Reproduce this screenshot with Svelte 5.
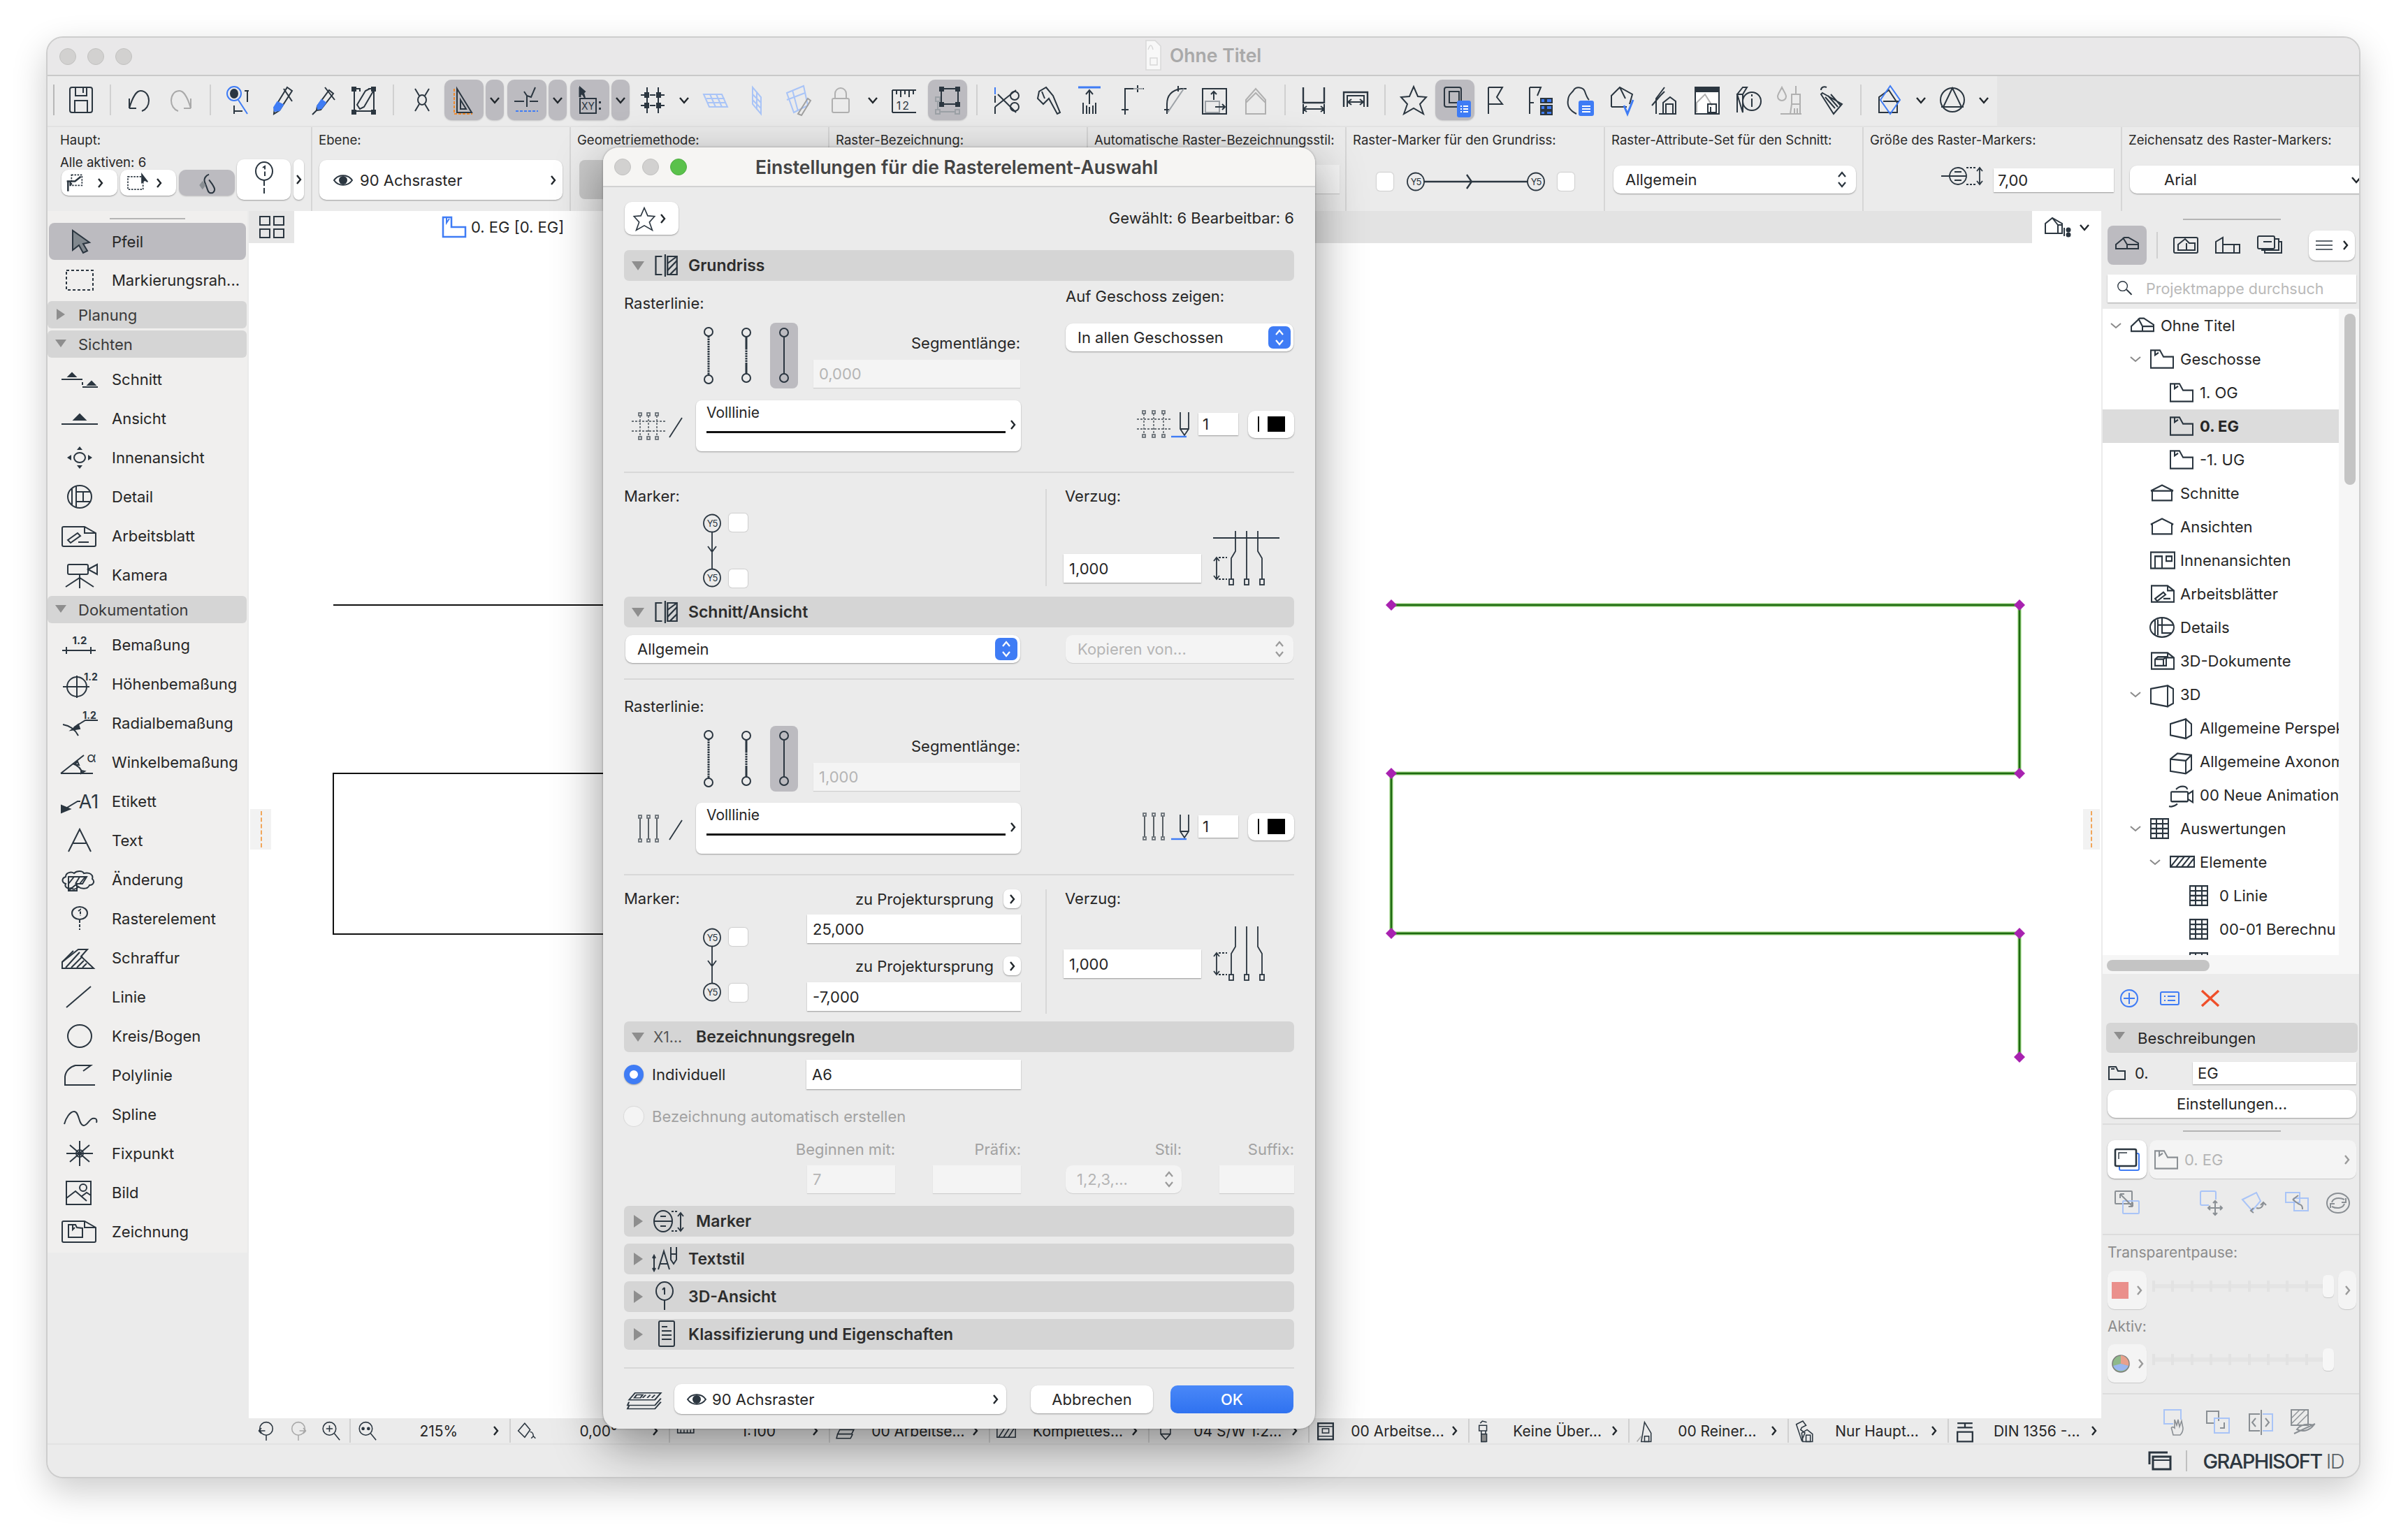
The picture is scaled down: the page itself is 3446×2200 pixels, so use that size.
<script>
	const blue = '#3f7cf5';

	const chevronPath = 'M3 3l5 6-5 6';

	const icons = {
		// toolbar
		save: '<rect x="6" y="4" width="32" height="36" rx="3"/><path d="M14 4v12h16V4M25 4v8M13 40V23h18v17"/>',
		undo: '<path d="M8 34h10M8 34V20M8 34C12 20 18 9 24 9c8 0 12 7 12 14 0 7-4 13-10 15"/>',
		redo: '<g stroke="#a9a9a9"><path d="M36 34H26M36 34V20M36 34C32 20 26 9 20 9 12 9 8 16 8 23c0 7 4 13 10 15"/></g>',
		find: `<circle cx="15" cy="13" r="10" stroke="${blue}"/><path d="M21 22l13 20" stroke="${blue}"/><ellipse cx="15" cy="13" rx="5" ry="6" fill="currentColor"/><path d="M34 9v16M30 9h6M15 30v12M15 38h12"/>`,
		dropper: `<path d="M31 4l7 5-18 28-8 5 1-9z"/><path d="M17 25l-5 8 1 5 7-1 5-8z" fill="${blue}" stroke="${blue}"/><path d="M26 6l12 18"/>`,
		syringe: `<path d="M32 8l6 5-18 23-6 1 1-6z"/><path d="M21 22l-6 9 1 4 5-1 6-8z" fill="${blue}" stroke="${blue}"/><path d="M26 4l14 18M14 37l-6 6"/>`,
		wand: '<path d="M8 6h8v4M8 6v30M8 36v6M8 38h28M36 6v36M30 6l-6 3-12 20 4 6 6-3 14-24M28 6h8"/><rect x="5" y="4" width="5" height="5" fill="currentColor"/><rect x="33" y="4" width="5" height="5" fill="currentColor"/><rect x="5" y="37" width="5" height="5" fill="currentColor"/><rect x="33" y="37" width="5" height="5" fill="currentColor"/>',
		cross: '<path d="M12 6l6 10M32 6l-6 10M12 38l6-10M32 38l-6-10"/><ellipse cx="22" cy="22" rx="6" ry="7"/>',
		setsq: '<path d="M12 6l21 34H12z"/><path d="M17 22l8 13h-8z"/><path d="M8 6v36h26" stroke="#ef8a2c" stroke-dasharray="4 2"/>',
		snap: `<path d="M4 24h14M26 24h12M22 16v16M22 16l6 2 6-14M22 16l-4-6"/><path d="M6 38h32" stroke="${blue}" stroke-dasharray="4 2"/>`,
		xy: '<path d="M8 4v14" stroke-width="3"/><path d="M8 4l7 6-2 2 2 7-4-6-3 2z" fill="currentColor"/><rect x="8" y="20" width="23" height="21"/><text x="19.5" y="36" font-size="14" text-anchor="middle" fill="currentColor" stroke="none">XY</text><rect x="35" y="24" width="3" height="3" fill="currentColor" stroke="none"/><rect x="35" y="33" width="3" height="3" fill="currentColor" stroke="none"/>',
		grid: '<path d="M14 4v8M30 4v8M14 19v8M30 19v8M14 33v8M30 33v8M5 15h6M18 15h8M33 15h6M5 30h6M18 30h8M33 30h6"/><g fill="currentColor" stroke="none"><rect x="10" y="11" width="7" height="8"/><rect x="27" y="11" width="7" height="8"/><rect x="10" y="26" width="7" height="8"/><rect x="27" y="26" width="7" height="8"/></g>',
		bgrid: '<g stroke="#a9c4f7"><path d="M6 14h26l8 18H14zM15 14l8 18M24 14l8 18M10 20h26M12 26h26"/></g>',
		bwall: '<g stroke="#a9c4f7"><path d="M16 4l12 14v24L16 28zM22 10v26M16 14l12 12M16 22l12 12"/></g>',
		bhat: '<g stroke="#a9c4f7"><path d="M6 12l24-10 6 28-20 10zM14 8l8 30M6 22l26-10"/></g><path d="M22 42l14-22 4 3-13 21z" stroke="#a0a0a0"/>',
		lock: '<g stroke="#b0b0b0"><rect x="9" y="20" width="24" height="20" rx="2"/><path d="M13 20v-7a8 8 0 0 1 16 0v7"/></g>',
		ruler: '<path d="M6 8h34M6 40h34M6 8v32M12 8v6M18 8v10M24 8v6M30 8v10M36 8v6"/><text x="22" y="36" font-size="16" text-anchor="middle" fill="currentColor" stroke="none" letter-spacing="2">12</text>',
		nodes: '<g stroke="#9ca1a6"><rect x="5" y="18" width="6" height="6" /><rect x="5" y="36" width="6" height="6"/><rect x="33" y="36" width="6" height="6"/><path d="M8 24v12M11 39h22"/></g><path d="M16 6h18M16 28h18M13 9v16M37 9v16"/><g fill="currentColor" stroke="none"><rect x="10" y="3" width="7" height="7"/><rect x="33" y="3" width="7" height="7"/><rect x="10" y="25" width="7" height="7"/><rect x="33" y="25" width="7" height="7"/></g>',
		sciss: `<path d="M6 4v10" stroke="${blue}"/><path d="M6 16v10M6 32v10M6 32L36 8M10 14l26 26"/><circle cx="34" cy="16" r="6"/><circle cx="34" cy="32" r="6"/>`,
		axe: '<path d="M20 4l10 12 10 24-4 2-12-22-8 8-8-8 2-10z"/><path d="M14 10l4 10"/>',
		uptrim: `<path d="M6 4h32" stroke="${blue}" stroke-width="3"/><path d="M22 8v20M17 14l5-6 5 6M13 26v16M22 32v10M31 26v16M18 30v12M27 30v12"/>`,
		corner: '<path d="M14 42V6h26M10 36h8M32 2v8" stroke-linecap="square"/><path d="M26 6h14" stroke="#9ca1a6"/>',
		fillet: '<path d="M14 42V28C14 14 22 8 34 6M10 36h8M30 2v8M34 6h8"/><path d="M15 40L38 6" stroke="#9ca1a6"/>',
		stretch: '<path d="M6 6h34v36H6z M6 6"/><path d="M22 10v12M18 14l4-4 4 4"/><rect x="10" y="24" width="20" height="16" stroke="#9ca1a6"/><path d="M24 32h14M34 28l4 4-4 4"/>',
		home: '<g stroke="#b0b0b0"><path d="M8 42V22L22 6l14 16v20z"/><path d="M8 26L22 12l14 14"/></g>',
		hsec: '<path d="M7 4v22h30V4" stroke-width="2.4"/><path d="M7 28v14M37 28v14M7 35h30M7 35l5-4M7 35l5 4M37 35l-5-4M37 35l-5 4"/>',
		hsec2: '<path d="M5 32V11h34v21" stroke-width="2.4"/><path d="M10 32V16h24v16"/><path d="M11 25h22M11 25l5-4M11 25l5 4M33 25l-5-4M33 25l-5 4"/>',
		star: '<path d="M22 3l6 14 12 1-9 10 5 14-14-8-14 8 5-14-9-10 12-1z"/>',
		views: `<rect x="7" y="4" width="24" height="28" rx="3"/><rect x="14" y="10" width="14" height="16"/><rect x="26" y="24" width="18" height="22" rx="2" fill="${blue}" stroke="${blue}"/><path d="M30 31h2M30 35h2M30 39h2M34 31h7M34 35h7M34 39h7" stroke="#fff" stroke-width="2"/>`,
		flag: '<path d="M12 4v38M12 4h20l-8 14 8 10H12"/>',
		flagl: `<path d="M10 4v38M10 4h16l-5 12M10 26h6"/><g fill="${blue}"><rect x="26" y="20" width="6" height="6"/><rect x="26" y="30" width="6" height="6"/><rect x="26" y="38" width="6" height="5"/><rect x="34" y="20" width="8" height="6"/><rect x="34" y="30" width="8" height="6"/><rect x="34" y="38" width="8" height="5"/></g>`,
		cloud: `<path d="M16 42C8 38 2 32 4 22c0-8 6-10 8-14 4-6 14-4 16 2 2 6 4 10 6 12"/><rect x="20" y="24" width="20" height="20" rx="2" fill="${blue}" stroke="${blue}"/><path d="M24 31h12M24 35h12M24 39h12" stroke="#fff" stroke-width="2"/>`,
		homeck: `<path d="M6 32V16L18 4l18 10-4 14M6 32h22M18 4l8 16"/><path d="M24 30l5 12 8-20" stroke="${blue}" stroke-width="3"/>`,
		homes: '<path d="M10 42V20L22 4M4 30l12-14 6-6M14 42h24V24l-8-6-10 8v16"/><rect x="24" y="28" width="10" height="14"/>',
		sheet: '<rect x="6" y="4" width="34" height="38" fill="#fff"/><rect x="6" y="4" width="34" height="6" fill="currentColor"/><path d="M8 40V26L20 14l10 16" stroke="#b0b0b0"/><rect x="24" y="28" width="12" height="12"/><path d="M28 32v8"/>',
		info: '<path d="M6 40V14L14 4h6l-6 10M6 14h8v26zM14 38V14"/><circle cx="27" cy="24" r="13"/><path d="M27 20v12M27 14v3"/>',
		brush: '<g stroke="#b0b0b0"><path d="M10 4c-4 8-6 10-6 13a6 6 0 0 0 12 0c0-3-2-5-6-13zM30 2v12M24 14h12v14H24zM24 28l-2 14M36 28v14M28 34v8M32 34v8M8 42h30" /></g>',
		tag: '<path d="M6 8c0-4 4-6 8-4M8 12l28 16-12 14L6 14zM16 16l14 16M20 14l14 16M12 18l14 16"/>',
		model: `<path d="M6 40V18L20 8l12 18v14z"/><path d="M22 2L8 22l14 20 14-20z" stroke="${blue}"/><path d="M12 24h22"/>`,
		circa: '<circle cx="22" cy="22" r="17"/><path d="M22 5L9 32h26zM6 32h32"/>',
		gridview: '<rect x="5" y="7" width="14" height="12"/><rect x="25" y="7" width="14" height="12"/><rect x="5" y="25" width="14" height="12"/><rect x="25" y="25" width="14" height="12"/>',
		view3: '<path d="M2 24V10L12 2l14 8v14zM12 2l8 10v12M20 12h6M29 16v12" /><circle cx="35" cy="19" r="2.5" fill="currentColor"/><circle cx="35" cy="26" r="2.5" fill="currentColor"/>',
		// status / misc
		zoomback: '<path d="M8 22h12M8 22l5-5M8 22l5 5"/><circle cx="22" cy="18" r="12"/><path d="M22 30v10"/>',
		zoomfwd: '<g stroke="#a9a9a9"><path d="M36 22H24M36 22l-5-5M36 22l-5 5"/><circle cx="22" cy="18" r="12"/><path d="M22 30v10"/></g>',
		zoomin: '<circle cx="20" cy="18" r="12"/><path d="M29 27l10 12M14 18h12M20 12v12"/>',
		zoomfit: '<circle cx="20" cy="18" r="12"/><path d="M29 27l10 12"/><circle cx="15" cy="18" r="2" fill="currentColor"/><circle cx="25" cy="18" r="2" fill="currentColor"/>',
		rotate: '<path d="M6 22L18 8l10 12-10 14zM28 24c4 0 6 4 6 8M30 36l4-4 4 4"/>',
		scale: '<path d="M6 12v14h30V12M12 20v6M18 20v6M24 20v6M30 20v6"/>',
		sheets: '<path d="M10 20h26l-4 8H6zM10 8h26l-4 8H6zM6 28l-2 8h26l4-8"/>',
		hatch: '<rect x="5" y="12" width="34" height="22"/><path d="M8 34L22 12M17 34L31 12M26 34L40 12"/>',
		penpt: '<path d="M13 8v20l9 10 9-10V8M13 28h18"/>',
		pageb: '<rect x="8" y="8" width="28" height="30" stroke-width="3"/><path d="M8 14h28M8 32h28"/><rect x="16" y="18" width="12" height="8"/>',
		overr: '<path d="M12 8l4-4 8 2M10 22V12h14v10z M14 22v20h8V22" /><rect x="14" y="28" width="10" height="14" fill="#8a8a8a"/>',
		renov: '<path d="M14 42L20 6l12 20v16z"/><rect x="20" y="32" width="8" height="10"/><path d="M6 42l8-10" stroke="#a9a9a9"/>',
		partial: '<path d="M6 10L18 4l6 8-8 4-2 4 8 6-6 14zM16 26l10-6 10 8v14H18z"/><rect x="24" y="30" width="8" height="12"/>',
		din: '<path d="M8 8h28M8 16h28M22 8v8M8 24h28v18H8z" stroke-width="3"/>',
		search: '<circle cx="17" cy="17" r="10"/><path d="M25 24l11 11" stroke-width="3"/>',
		// dialog icons
		secgrid: '<g transform="translate(-3 4) scale(1.12 1)"><path d="M12 4H4v26h8M16 1v32" /><rect x="19" y="4" width="12" height="26"/><path d="M19 14l12-10M19 24l12-14M22 30l9-10"/></g>',
		eye: '<path d="M3 16C9 7 23 7 29 16 23 25 9 25 3 16z"/><circle cx="16" cy="16" r="6" fill="currentColor" stroke="none"/>',
		stack: '<path d="M10 8h34l-8 14H2zM2 26l-2 7h36l8-14M2 34l-2 6h36l8-14"/><path d="M12 12h8l-3 6H9zM24 12l-4 6M30 12l-4 6M36 12l-4 6"/>',
		marker: '<g transform="translate(-4 2)"><ellipse cx="18" cy="19" rx="13" ry="15"/><path d="M5 19h26M14 12h8M14 26h8"/><path d="M30 5h8M30 33h8" stroke-dasharray="3 2"/><path d="M43 7v26M39 12l4-5 4 5M39 28l4 5 4-5"/></g>',
		textst: '<g transform="translate(-3 2)"><path d="M26 2v18l4 6 4-6V2M26 12h8" /><path d="M8 34L16 8l8 26M11 26h10M2 14v22M0 18l2-4 2 4M0 32l2 4 2-4"/></g>',
		pin: '<ellipse cx="14" cy="13" rx="12" ry="13"/><path d="M14 26v14M14 8v10M11 11l3-3"/>',
		doc: '<rect x="6" y="2" width="22" height="36" rx="2"/><path d="M10 10h8M10 16h14M10 22h14M10 28h14"/>',
		plus: `<circle cx="16" cy="16" r="12" stroke="${blue}"/><path d="M8 16h16M16 8v16" stroke="${blue}"/>`,
		listb: `<rect x="3" y="7" width="26" height="18" rx="2" stroke="${blue}"/><path d="M8 13h2M8 19h2M13 13h11M13 19h11" stroke="${blue}"/>`,
		redx: '<path d="M4 4l24 22M28 4L4 26" stroke="#ef4f2a" stroke-width="3.4"/>'
	};

	const side = {
		pfeil: '<path d="M18 2v28l9-7 6 11 6-3-6-10 9-2z" fill="#81888e"/>',
		marquee: '<rect x="9" y="4" width="38" height="28" stroke-dasharray="4 3"/>',
		schnitt: '<path d="M2 18h30M32 26v-4M32 29h22"/><path d="M12 14l5-5 5 5z M40 26l5-5 5 5z" fill="currentColor"/>',
		ansicht: '<path d="M2 26h52"/><path d="M20 20l8-8 8 8z" fill="currentColor"/>',
		innen: '<ellipse cx="28" cy="18" rx="8" ry="7"/><path d="M28 2l-4 5h8zM28 34l-4-5h8zM10 18l6-4v8zM46 18l-6-4v8z" fill="currentColor" stroke="none"/>',
		detail: '<ellipse cx="28" cy="18" rx="17" ry="16"/><path d="M17 6v24M23 3v30M23 11h21M23 25h21M33 11v14"/>',
		blatt: '<path d="M5 5h30l16 9v17a2 2 0 0 1-2 2H5a2 2 0 0 1-2-2V7a2 2 0 0 1 2-2zM35 5v9h16M26 27h15"/><path d="M11 24l14-10 4 4-14 10z"/>',
		kamera: '<rect x="11" y="3" width="29" height="14" rx="2"/><path d="M40 10l13-7v14zM28 17v20M8 35l20-13 20 13"/>',
		bem: '<path d="M3 26h48M9 21v10M44 21v10"/><text x="28" y="17" font-size="15" font-weight="700" text-anchor="middle" fill="currentColor" stroke="none">1.2</text>',
		hoehe: '<circle cx="24" cy="22" r="14"/><path d="M4 22h38M24 6v32"/><text x="44" y="13" font-size="14" font-weight="700" text-anchor="middle" fill="currentColor" stroke="none">1.2</text>',
		rad: '<path d="M4 20c12 2 18 8 22 16M20 24l16-10h18"/><path d="M16 28l10-8 2 6z" fill="currentColor"/><text x="42" y="12" font-size="14" font-weight="700" text-anchor="middle" fill="currentColor" stroke="none">1.2</text>',
		wink: '<path d="M1 34h46M1 34L34 8M18 20c6 2 12 7 14 14M25 17l-4 4 6 1zM30 30l5 1-5 3z"/><text x="45" y="18" font-size="20" text-anchor="middle" fill="currentColor" stroke="none">α</text>',
		etikett: '<path d="M5 30l20-12h4"/><path d="M2 34V24l12 5z" fill="currentColor"/><text x="41" y="28" font-size="27" text-anchor="middle" fill="currentColor" stroke="none">A1</text>',
		text: '<path d="M12 34L28 2l16 32M19 22h18"/>',
		aend: '<path d="M16 30c-6 2-10-2-8-6-6-2-6-8 0-10 0-6 8-8 12-5 4-4 12-4 14 0 8-2 14 2 12 8 4 3 2 9-4 9-2 6-12 6-16 2-2 4-8 5-10 2z"/><path d="M12 14h26l-6 10h-8v10h-12zM24 24l-12 10M20 14l-8 10M28 14l-6 10M36 14l-8 10"/>',
		raster: '<ellipse cx="28" cy="10" rx="11" ry="9"/><path d="M26 7l3-2v9M28 20v14" stroke-dasharray="4 2"/>',
		schraff: '<path d="M3 32V24L26 6h13l-9 10 18 17H3z"/><path d="M3 24l16-16M8 32L28 10M16 32l16-16M24 32l10-10M32 32l6-6"/>',
		linie: '<path d="M9 33L44 3"/>',
		kreis: '<ellipse cx="28" cy="18" rx="17" ry="16"/>',
		poly: '<path d="M50 32H7V20C8 12 14 6 22 4h22L33 12"/>',
		spline: '<path d="M6 32c2-8 8-18 14-18 8 0 6 20 14 20 6 0 8-12 16-10 2 0 3 3 2 6"/>',
		fix: '<circle cx="28" cy="18" r="5"/><path d="M9 18h38M28 0v36M14 6l28 24M42 6L14 30"/>',
		bild: '<rect x="9" y="2" width="35" height="33"/><circle cx="33" cy="11" r="5"/><path d="M9 26l13-10 16 14M30 24l8-6 6 4"/>',
		zeich: '<path d="M5 3h30l16 9v19a2 2 0 0 1-2 2H5a2 2 0 0 1-2-2V5a2 2 0 0 1 2-2zM35 3v9h16"/><path d="M12 8h10l2 4 8 1v13H12zM18 8v7l3-3"/>'
	};

	const tree = {
		house: '<path d="M2 20V14L14 4h6l14 8v8zM12 4l6 10v6M18 14h16"/>',
		floor: '<path d="M2 2h13l5 8h14v14H2zM8 2v6l5-3"/>',
		section: '<path d="M2 10L18 3l16 7M4 10h28v12H4zM2 10h32"/>',
		elev: '<path d="M2 10L18 3l16 7H32v12H4V10z"/>',
		inner: '<rect x="2" y="3" width="34" height="20"/><path d="M8 23V8h10v15M24 8h8v6h-8z"/>',
		sheet: '<path d="M3 3h23l9 6v14H3zM26 3v6h9"/><path d="M8 19l12-8 3 3-12 8zM20 19h10"/>',
		det: '<ellipse cx="18" cy="13" rx="17" ry="12"/><path d="M8 3v20M12 3v20M18 1v9h17M12 10h6v10h8M18 20h14"/>',
		doc3: '<path d="M3 3h23l9 6v14H3zM26 3v6h9"/><path d="M8 11l4-3h12v11H8zM8 11h12v8M20 11l4-3"/>',
		box3: '<path d="M2 6l24-4v26L2 24zM26 2l8 4v18l-8 4"/>',
		pers: '<path d="M2 8l22-6v24L2 22zM24 2l8 6v14l-8 4"/>',
		axon: '<path d="M2 10L12 3l20 2v18l-8 5-22-3zM2 10l22 2v16M24 12l8-7"/>',
		anim: '<rect x="3" y="9" width="24" height="12" rx="1"/><path d="M27 12l7-4v14l-7-4M10 6c6-6 16-4 16 0M0 27c4 1 8 0 12-3"/>',
		table: '<rect x="2" y="1" width="25" height="24"/><path d="M2 7h25M2 13h25M2 19h25M10 1v24M19 1v24"/>',
		hatchr: '<rect x="2" y="6" width="34" height="13"/><path d="M2 19l12-13M10 19L22 6M18 19L30 6M26 19l10-11"/>'
	};

	const tools = [
		{ k: 'sep', first: true },
		{ i: 'save' }, { k: 'sep' }, { i: 'undo' }, { i: 'redo' }, { k: 'sep' },
		{ i: 'find' }, { i: 'dropper' }, { i: 'syringe' }, { i: 'wand' }, { k: 'sep' },
		{ i: 'cross' },
		{ i: 'setsq', on: true, ml: 2 }, { k: 'drop', on: true, ml: 3 },
		{ i: 'snap', on: true, ml: 5 }, { k: 'drop', on: true, ml: 3 },
		{ i: 'xy', on: true, ml: 5 }, { k: 'drop', on: true, ml: 3 },
		{ i: 'grid', ml: 3 }, { k: 'drop', w: 30 },
		{ i: 'bgrid' }, { i: 'bwall' }, { i: 'bhat' }, { i: 'lock', ml: 2 }, { k: 'drop', w: 30 },
		{ i: 'ruler' }, { i: 'nodes', on: true, ml: 5 }, { k: 'sep', ml: 13 },
		{ i: 'sciss' }, { i: 'axe' }, { i: 'uptrim' }, { i: 'corner' }, { i: 'fillet' }, { i: 'stretch' }, { i: 'home' }, { k: 'sep' },
		{ i: 'hsec' }, { i: 'hsec2' }, { k: 'sep' },
		{ i: 'star' }, { i: 'views', on: true, ml: 1 },
		{ i: 'flag', w: 60 }, { i: 'flagl', w: 62 }, { i: 'cloud', w: 60 }, { i: 'homeck', w: 60 }, { i: 'homes', w: 60 },
		{ i: 'sheet', w: 60 }, { i: 'info', w: 60 }, { i: 'brush', w: 60 }, { i: 'tag', w: 60 }, { k: 'sep', ml: 10 },
		{ i: 'model', w: 60 }, { k: 'drop', w: 28 }, { i: 'circa', w: 62 }, { k: 'drop', w: 28 }
	];

	const sideItems = [
		{ t: 'item', i: 'pfeil', label: 'Pfeil', on: true },
		{ t: 'item', i: 'marquee', label: 'Markierungsrah...' },
		{ t: 'head', label: 'Planung', closed: true },
		{ t: 'head', label: 'Sichten' },
		{ t: 'item', i: 'schnitt', label: 'Schnitt' },
		{ t: 'item', i: 'ansicht', label: 'Ansicht' },
		{ t: 'item', i: 'innen', label: 'Innenansicht' },
		{ t: 'item', i: 'detail', label: 'Detail' },
		{ t: 'item', i: 'blatt', label: 'Arbeitsblatt' },
		{ t: 'item', i: 'kamera', label: 'Kamera' },
		{ t: 'head', label: 'Dokumentation' },
		{ t: 'item', i: 'bem', label: 'Bemaßung' },
		{ t: 'item', i: 'hoehe', label: 'Höhenbemaßung' },
		{ t: 'item', i: 'rad', label: 'Radialbemaßung' },
		{ t: 'item', i: 'wink', label: 'Winkelbemaßung' },
		{ t: 'item', i: 'etikett', label: 'Etikett' },
		{ t: 'item', i: 'text', label: 'Text' },
		{ t: 'item', i: 'aend', label: 'Änderung' },
		{ t: 'item', i: 'raster', label: 'Rasterelement' },
		{ t: 'item', i: 'schraff', label: 'Schraffur' },
		{ t: 'item', i: 'linie', label: 'Linie' },
		{ t: 'item', i: 'kreis', label: 'Kreis/Bogen' },
		{ t: 'item', i: 'poly', label: 'Polylinie' },
		{ t: 'item', i: 'spline', label: 'Spline' },
		{ t: 'item', i: 'fix', label: 'Fixpunkt' },
		{ t: 'item', i: 'bild', label: 'Bild' },
		{ t: 'item', i: 'zeich', label: 'Zeichnung' }
	];

	const treeRows = [
		{ l: 0, open: true, i: 'house', label: 'Ohne Titel' },
		{ l: 1, open: true, i: 'floor', label: 'Geschosse' },
		{ l: 2, i: 'floor', label: '1. OG' },
		{ l: 2, i: 'floor', label: '0. EG', sel: true },
		{ l: 2, i: 'floor', label: '-1. UG' },
		{ l: 1, i: 'section', label: 'Schnitte' },
		{ l: 1, i: 'elev', label: 'Ansichten' },
		{ l: 1, i: 'inner', label: 'Innenansichten' },
		{ l: 1, i: 'sheet', label: 'Arbeitsblätter' },
		{ l: 1, i: 'det', label: 'Details' },
		{ l: 1, i: 'doc3', label: '3D-Dokumente' },
		{ l: 1, open: true, i: 'box3', label: '3D' },
		{ l: 2, i: 'pers', label: 'Allgemeine Perspek' },
		{ l: 2, i: 'axon', label: 'Allgemeine Axonom' },
		{ l: 2, i: 'anim', label: '00 Neue Animation' },
		{ l: 1, open: true, i: 'table', label: 'Auswertungen' },
		{ l: 2, open: true, i: 'hatchr', label: 'Elemente' },
		{ l: 3, i: 'table', label: '0 Linie' },
		{ l: 3, i: 'table', label: '00-01 Berechnu' },
		{ l: 3, i: 'table', label: '' }
	];

	const infoLabels = [
		'Haupt:', 'Ebene:', 'Geometriemethode:', 'Raster-Bezeichnung:', 'Automatische Raster-Bezeichnungsstil:',
		'Raster-Marker für den Grundriss:', 'Raster-Attribute-Set für den Schnitt:', 'Größe des Raster-Markers:', 'Zeichensatz des Raster-Markers:'
	];

	const status = [
		{ i: 'rotate', label: '0,00°' }, { i: 'scale', label: '1:100' }, { i: 'sheets', label: '00 Arbeitse...' },
		{ i: 'hatch', label: 'Komplettes...' }, { i: 'penpt', label: '04 S/W 1:2...' }, { i: 'pageb', label: '00 Arbeitse...' },
		{ i: 'overr', label: 'Keine Über...' }, { i: 'renov', label: '00 Reiner...' }, { i: 'partial', label: 'Nur Haupt...' }, { i: 'din', label: 'DIN 1356 -...' }
	];

	const greens = [[1991, 866], [2890, 866], [2890, 1107], [1991, 1107], [1991, 1336], [2890, 1336], [2890, 1513]];
	const ticks = Array.from({ length: 10 });
</script>

{#snippet ic(name, w = 44, h = 44, set = icons)}
	<svg class="ic" width={w} height={h} viewBox="0 0 {w} {h}">{@html set[name]}</svg>
{/snippet}

{#snippet chevron(cls = '')}
	<svg class="chev {cls}" width="11" height="18" viewBox="0 0 11 18"><path d={chevronPath} /></svg>
{/snippet}

{#snippet drop()}
	<svg class="chev" width="16" height="11" viewBox="0 0 16 11"><path d="M2 2l6 7 6-7" /></svg>
{/snippet}

{#snippet updown(white = false)}
	<svg class="updown" class:white width="16" height="26" viewBox="0 0 16 26"><path d="M3 9l5-6 5 6M3 17l5 6 5-6" /></svg>
{/snippet}

{#snippet ys(cx, cy)}
	<ellipse {cx} {cy} rx="12" ry="12.5" />
	<text x={cx} y={cy + 5} font-size="13" text-anchor="middle" fill="currentColor" stroke="none" letter-spacing="-1">Y5</text>
{/snippet}

{#snippet sectionHead(label, iconName, closed = false, cls = '')}
	<div class="sechead {cls}">
		<span class="tri" class:closed></span>
		<span class="secicon">
			{#if iconName}
				<svg class="ic" width="46" height="42" viewBox="0 0 46 42" >{@html icons[iconName]}</svg>
			{:else}
				<span class="x1">X1...</span>
			{/if}
		</span>
		<span>{label}</span>
	</div>
{/snippet}

{#snippet lineTypes()}
	<div class="linetypes">
		<div class="lt">
			<svg class="ic" width="24" height="84" viewBox="0 0 24 84"><circle cx="12" cy="8" r="6" /><circle cx="12" cy="76" r="6" /><path d="M12 14v56" stroke-dasharray="2.5 1" stroke-width="3" /></svg>
		</div>
		<div class="lt">
			<svg class="ic" width="24" height="84" viewBox="0 0 24 84"><circle cx="12" cy="9" r="6" /><circle cx="12" cy="74" r="6" /><path d="M12 15v16M12 52v16" stroke-width="3" /><path d="M12 31v21" stroke-dasharray="2.5 1" stroke-width="3" /></svg>
		</div>
		<div class="lt on">
			<svg class="ic" width="24" height="84" viewBox="0 0 24 84"><circle cx="12" cy="9" r="6" /><circle cx="12" cy="74" r="6" /><path d="M12 15v53" /></svg>
		</div>
	</div>
{/snippet}

{#snippet lineBox()}
	<div class="linebox">
		<span class="lbtxt">Volllinie</span>
		<div class="lbline"><span></span>{@render chevron()}</div>
	</div>
{/snippet}

{#snippet penRow(dense)}
	<div class="penrow">
		<svg class="ic thin" width="78" height="38" viewBox="0 0 78 38">
			{#if dense}
				<path d="M2 12h50M2 26h50M12 4v30M26 4v30M40 4v30" stroke-dasharray="3 2" stroke="#6b7278" />
				<g stroke="#6b7278"><rect x="10" y="0" width="4" height="4" /><rect x="24" y="0" width="4" height="4" /><rect x="38" y="0" width="4" height="4" /><rect x="10" y="34" width="4" height="4" /><rect x="24" y="34" width="4" height="4" /><rect x="38" y="34" width="4" height="4" /></g>
			{:else}
				<path d="M13 4v30M26 4v30M39 4v30" stroke="#4b5258" />
				<g stroke="#6b7278"><rect x="11" y="0" width="4" height="4" /><rect x="24" y="0" width="4" height="4" /><rect x="37" y="0" width="4" height="4" /><rect x="11" y="34" width="4" height="4" /><rect x="24" y="34" width="4" height="4" /><rect x="37" y="34" width="4" height="4" /></g>
			{/if}
			<path d="M64 2v24l6 9 6-9V2M64 26h12" />
			<path d="M51 37h22" stroke={blue} stroke-width="2.4" />
		</svg>
		<div class="field num pennum">1</div>
		<div class="colbtn"><i></i><b></b></div>
	</div>
{/snippet}

{#snippet offsetIcon(top)}
	<svg class="ic thin" width="95" height="78" viewBox="0 0 95 78">
		{#if top}<path d="M0 10h95" />{/if}
		<path d="M32 0v29l-6 10v30M48 0v69M64 0v29l6 10v30" />
		<path d="M5 38v31M1 43l4-5 4 5M1 64l4 5 4-5" />
		<path d="M8 38h12M8 69h12" stroke-dasharray="3 2" />
		<rect x="23" y="69" width="6" height="8" /><rect x="45" y="69" width="6" height="8" /><rect x="67" y="69" width="6" height="8" />
	</svg>
{/snippet}

{#snippet markerBlock()}
	<div class="markerblock">
		<svg class="ic thin" width="26" height="106" viewBox="0 0 26 106">
			{@render ys(13, 14)}
			{@render ys(13, 92)}
			<path d="M13 27v52M7 47l6 8 6-8" />
		</svg>
		<div class="checks"><span class="check"></span><span class="check"></span></div>
	</div>
{/snippet}

<div class="page">
	<div class="window">
		<header class="titlebar">
			<div class="lights"><i></i><i></i><i></i></div>
			<div class="wintitle">
				<svg width="24" height="44" viewBox="0 0 24 44" fill="#f8f8f8" stroke="#d8d8d8" stroke-width="1.5"><path d="M2 1h13l8 8v34H2z" /><path d="M5 14c3-8 5-8 7 0M8 26h10v10H8z" /></svg>
				<span>Ohne Titel</span>
			</div>
		</header>

		<div class="toolrow">
			<div class="toolbar">
				{#each tools as t}
					{#if t.k === 'sep'}
						<span class="tsep" class:first={t.first} style={t.ml ? `margin-left:${t.ml}px` : ''}></span>
					{:else if t.k === 'drop'}
						<span class="tdrop" class:on={t.on} style="width:{t.w ?? 26}px;margin-left:{t.ml ?? 0}px">{@render drop()}</span>
					{:else}
						<span class="tool" class:on={t.on} style="width:{t.on ? 56 : (t.w ?? 59.5)}px;margin-left:{t.ml ?? 0}px">{@render ic(t.i)}</span>
					{/if}
				{/each}
			</div>
		</div>

		<div class="infobox">
			{#each infoLabels as label, n}
				<section class="infocell">
					<div class="infolabel">{label}</div>
					{#if n === 0}
						<div class="haupt">
							<div class="alle">Alle aktiven: 6</div>
							<div class="hauptbtns">
								<span class="wbtn hb">
									<svg class="ic" width="40" height="34" viewBox="0 0 48 34"><path d="M4 31V14h12l10-8M2 14h6M8 14v8" stroke-width="3" /><rect x="10" y="3" width="18" height="18" stroke-dasharray="3 2" /></svg>
									{@render chevron()}
								</span>
								<span class="wbtn hb">
									<svg class="ic" width="40" height="34" viewBox="0 0 48 34"><rect x="6" y="6" width="26" height="22" stroke-dasharray="3 2" /><path d="M30 2v14l5-4 5 3z" fill="currentColor" /></svg>
									{@render chevron()}
								</span>
								<span class="hb grey">
									<svg class="ic" width="34" height="36" viewBox="0 0 44 44"><path d="M26 6c-6 2-10 8-8 14l6 16c2 6 10 6 12 0 2-4-2-8-4-12L26 16" stroke-width="2.6" /><path d="M14 18l-6 8 6 8 6-8z" fill="#8a8f94" stroke="none" /></svg>
								</span>
							</div>
						</div>
						<div class="pinbtn wbtn">
							<svg class="ic" width="30" height="52" viewBox="0 0 30 52"><ellipse cx="15" cy="14" rx="12" ry="13" /><path d="M13 9l3-2v14M15 27v22" stroke-dasharray="8 3" /></svg>
						</div>
						<div class="pinmore wbtn">{@render chevron()}</div>
					{:else if n === 1}
						<div class="ebene wbtn">
							<svg class="ic" width="32" height="32" viewBox="0 0 32 32">{@html icons.eye}</svg>
							<span>90 Achsraster</span>
							{@render chevron()}
						</div>
					{:else if n === 2}
						<div class="geom"></div>
					{:else if n === 4}
						<div class="autofld"></div>
					{:else if n === 5}
						<div class="markerline">
							<span class="check"></span>
							<svg class="ic thin" width="200" height="28" viewBox="0 0 200 28">
								{@render ys(14, 14)}
								<path d="M26 14h148M87 4l7 10-7 10" stroke-width="2.4" />
								{@render ys(186, 14)}
							</svg>
							<span class="check"></span>
						</div>
					{:else if n === 6}
						<div class="select wbtn attr"><span>Allgemein</span>{@render updown()}</div>
					{:else if n === 7}
						<div class="sizerow">
							<svg class="ic thin" width="62" height="28" viewBox="0 0 62 28"><circle cx="24" cy="14" r="12" /><path d="M0 14h36M19 8h10M19 20h10" /><path d="M36 2h14M36 26h14" stroke-dasharray="3 2" /><path d="M55 2v24M51 7l4-5 4 5M51 21l4 5 4-5" /></svg>
							<div class="field sizeinp">7,00</div>
						</div>
					{:else if n === 8}
						<div class="select wbtn font"><span>Arial</span>{@render drop()}</div>
					{/if}
				</section>
			{/each}
		</div>

		<div class="main">
			<aside class="leftpanel">
				<div class="grab"></div>
				<div class="sidelist">
					{#each sideItems as s}
						{#if s.t === 'head'}
							<div class="sidehead"><span class="tri small" class:closed={s.closed}></span>{s.label}</div>
						{:else}
							<div class="sideitem" class:on={s.on}>
								<svg class="ic" width="56" height="36" viewBox="0 0 56 36">{@html side[s.i]}</svg>
								<span>{s.label}</span>
							</div>
						{/if}
					{/each}
				</div>
			</aside>

			<div class="center">
				<div class="tabs">
					<div class="gridbtn">{@render ic('gridview')}</div>
					<div class="tab">
						<svg class="ic" width="36" height="32" viewBox="0 0 36 32"><path d="M2 2h12v14h20v14H2z" stroke={blue} stroke-width="2.5" /><path d="M7 2v8l4-6" stroke={blue} /></svg>
						<span>0. EG [0. EG]</span>
					</div>
					<div class="tabfill"></div>
					<div class="tabr">
						<svg class="ic" width="44" height="30" viewBox="0 0 44 30">{@html icons.view3}</svg>
						{@render drop()}
					</div>
				</div>
				<div class="canvas">
					<div class="orange left"></div>
					<div class="orange right"></div>
					<svg class="drawing" viewBox="356 348 2651 1682" preserveAspectRatio="none">
						<path d="M477 866H1000M1000 1107H477V1337H1000" fill="none" stroke="#111" stroke-width="2" />
						<path d="M1991 866H2890V1107H1991V1336H2890V1513" fill="none" stroke="#8ccb70" stroke-width="5" />
						<path d="M1991 866H2890V1107H1991V1336H2890V1513" fill="none" stroke="#1f6a12" stroke-width="2.5" />
						{#each greens as [x, y]}
							<path d="M{x - 8} {y}l8-8 8 8-8 8z" fill="#a822b0" />
						{/each}
					</svg>
				</div>
				<div class="statusbar">
					<div class="zooms">
						{@render ic('zoomback')}{@render ic('zoomfwd')}{@render ic('zoomin')}
					</div>
					<div class="scell zoomcell">{@render ic('zoomfit')}<span class="stxt">215%</span>{@render chevron()}</div>
					{#each status as s}
						<div class="scell">
							{@render ic(s.i)}
							<span class="stxt">{s.label}</span>
							{@render chevron()}
						</div>
					{/each}
				</div>
			</div>

			<aside class="rightpanel">
				<div class="grab"></div>
				<div class="rtabs">
					<span class="rtab on"><svg class="ic" width="38" height="30" viewBox="0 0 36 30">{@html tree.house}</svg></span>
					<span class="rsep"></span>
					<span class="rtab"><svg class="ic" width="38" height="30" viewBox="0 0 38 30"><rect x="2" y="4" width="34" height="22" rx="2" /><path d="M8 22V14l10-8 6 6h8v10zM20 12v10" /></svg></span>
					<span class="rtab"><svg class="ic" width="38" height="30" viewBox="0 0 38 30"><path d="M2 26V10L12 4v22zM12 26h24V14h-8v12M12 14h16" /></svg></span>
					<span class="rtab"><svg class="ic" width="38" height="30" viewBox="0 0 38 30"><rect x="2" y="2" width="24" height="18" rx="2" /><path d="M6 2v-0M26 6h6v16H8v-2M32 10h4v16H12v-4M10 10h12" /></svg></span>
					<span class="menubtn wbtn"><svg class="ic" width="26" height="16" viewBox="0 0 26 16"><path d="M1 2h24M1 8h24M1 14h24" stroke-width="1.6" /></svg>{@render chevron()}</span>
				</div>
				<div class="search">
					<svg class="ic" width="30" height="30" viewBox="0 0 44 44">{@html icons.search}</svg>
					<span>Projektmappe durchsuch</span>
				</div>
				<div class="treewrap">
					<div class="tree">
						{#each treeRows as r}
							<div class="trow" class:sel={r.sel} style="padding-left:{r.l * 28}px">
								<span class="tchev">
									{#if r.open}<svg width="16" height="9" viewBox="0 0 16 9"><path d="M1 1l7 6 7-6" /></svg>{/if}
								</span>
								<span class="ticon">
									<svg class="ic" width="36" height="30" viewBox="0 0 36 26" preserveAspectRatio="none">{@html tree[r.i]}</svg>
								</span>
								<span class="tlabel">{r.label}</span>
							</div>
						{/each}
					</div>
					<div class="vscroll"><i></i></div>
				</div>
				<div class="hscroll"><i></i></div>
				<div class="actions">
					<svg class="ic" width="32" height="32" viewBox="0 0 32 32">{@html icons.plus}</svg>
					<svg class="ic" width="32" height="32" viewBox="0 0 32 32">{@html icons.listb}</svg>
					<svg class="ic" width="32" height="30" viewBox="0 0 32 30">{@html icons.redx}</svg>
				</div>
				<div class="beschr"><span class="tri small"></span>Beschreibungen</div>
				<div class="descrow">
					<svg class="ic" width="27" height="22" viewBox="0 0 27 22"><path d="M2 2h10l3 6h10v12H2zM5 5h5" /></svg>
					<span class="desc0">0.</span>
					<div class="field descinp">EG</div>
				</div>
				<div class="wbtn einst">Einstellungen...</div>
				<div class="rdiv"></div>
				<div class="grab g2"></div>
				<div class="quick">
					<span class="wbtn qb">
						<svg class="ic" width="38" height="34" viewBox="0 0 38 34"><rect x="8" y="8" width="28" height="24" rx="2" stroke={blue} /><rect x="2" y="2" width="30" height="24" rx="2" fill="#fff" stroke-width="2.6" /><path d="M7 16V7h12" stroke-width="1.4" /></svg>
					</span>
					<span class="qstory">
						<svg class="ic dim" width="36" height="30" viewBox="0 0 36 26" preserveAspectRatio="none">{@html tree.floor}</svg>
						<span>0. EG</span>
						{@render chevron('cg')}
					</span>
				</div>
				<div class="navicons five">
					<svg class="ic dim" width="38" height="38" viewBox="0 0 38 38"><rect x="2" y="2" width="24" height="18" rx="1" stroke="#8a8f94" /><rect x="13" y="16" width="23" height="18" rx="1" stroke="#a9c4f7" /><path d="M9 6l18 18M9 6h6M9 6v6M27 24h-6M27 24v-6" stroke="#8a8f94" /></svg>
					<span class="navgap"></span>
					<svg class="ic dim" width="38" height="38" viewBox="0 0 38 38"><path d="M14 22H4a2 2 0 0 1-2-2V4a2 2 0 0 1 2-2h18a2 2 0 0 1 2 2v10" stroke="#a9c4f7" /><path d="M23 16v20M13 26h20M20 19l3-3 3 3M20 33l3 3 3-3M16 23l-3 3 3 3M30 23l3 3-3 3" stroke="#8a8f94" /></svg>
					<svg class="ic dim" width="38" height="38" viewBox="0 0 38 38"><path d="M2 14L22 4l6 12-12 14z" stroke="#a9c4f7" /><path d="M22 26c6 2 10-2 10-8M28 22l4-4 4 4M18 26l-4 4 4 3" stroke="#8a8f94" /></svg>
					<svg class="ic dim" width="38" height="38" viewBox="0 0 38 38"><path d="M4 4h20v14H4z" stroke="#a9c4f7" /><path d="M16 12h20v18H16z" stroke="#a9c4f7" /><path d="M14 14l8-6M14 14l8 6c4 2 6 2 6 8" stroke="#8a8f94" /></svg>
					<svg class="ic dim" width="38" height="38" viewBox="0 0 38 38"><ellipse cx="19" cy="19" rx="16" ry="14" stroke="#8a8f94" /><path d="M10 18c2-6 10-8 18-4M30 12v6h-6M28 20c-2 6-10 8-18 4M8 26v-6h6" stroke="#8a8f94" /></svg>
				</div>
				<div class="rdiv"></div>
				<div class="ghostlabel tp">Transparentpause:</div>
				<div class="sliderrow">
					<span class="qbd"><i class="swatch"></i>{@render chevron('cg')}</span>
					<div class="slider">
						<div class="trk">{#each ticks as _}<i></i>{/each}</div>
						<b></b>
					</div>
					<span class="qbd narrow">{@render chevron('cg')}</span>
				</div>
				<div class="ghostlabel ak">Aktiv:</div>
				<div class="sliderrow">
					<span class="qbd">
						<svg width="26" height="26" viewBox="0 0 26 26"><circle cx="13" cy="13" r="12" fill="#8fb98a" stroke="#7c7c7c" stroke-width="1.6" /><path d="M13 13V1a12 12 0 0 1 11 15z" fill="#e8a08c" /><path d="M13 13l11 3a12 12 0 0 1-22 0z" fill="#9ab6f0" /></svg>
						{@render chevron('cg')}
					</span>
					<div class="slider">
						<div class="trk">{#each ticks as _}<i></i>{/each}</div>
						<b></b>
					</div>
				</div>
				<div class="rdiv d3"></div>
				<div class="navicons four">
					<svg class="ic dim" width="38" height="38" viewBox="0 0 38 38"><path d="M16 22H3V2h24v14" stroke="#a9c4f7" /><path d="M14 30c-2-4 2-4 4-2V16l3 8 2-8 2 10 3-8 2 10c0 6-2 8-4 10H16z" stroke="#8a8f94" stroke-width="1.6" /></svg>
					<svg class="ic dim" width="38" height="38" viewBox="0 0 38 38"><path d="M20 18V4H3v17h10" stroke="#8a8f94" /><path d="M14 14h21v21H14z" stroke="#a9c4f7" /><path d="M28 20v8h-6" stroke="#8a8f94" /></svg>
					<svg class="ic dim" width="38" height="38" viewBox="0 0 38 38"><path d="M18 8H3v24h15" stroke="#8a8f94" /><path d="M22 8h14v24H22" stroke="#a9c4f7" /><path d="M20 2v36" stroke="#8a8f94" /><path d="M12 14l-5 6 5 6" stroke="#8a8f94" /><path d="M26 14l5 6-5 6" stroke="#8a8f94" /></svg>
					<svg class="ic dim" width="38" height="38" viewBox="0 0 38 38"><rect x="2" y="2" width="24" height="22" stroke="#8a8f94" /><path d="M2 14L14 2M2 22L22 2M10 24L26 8" stroke="#8a8f94" stroke-width="1.4" /><path d="M10 30c6-8 16-8 24-6-6 8-16 10-24 6zM6 36L36 22" stroke="#8a8f94" /></svg>
				</div>
			</aside>
		</div>

		<footer class="bottombar">
			<svg class="ic" width="34" height="30" viewBox="0 0 34 30"><path d="M2 20V3h26" stroke-width="3" /><rect x="7" y="9" width="25" height="18" stroke-width="3" /><path d="M7 14h25" /></svg>
			<span class="bsep"></span>
			<span class="gs">GRAPHISOFT <em>ID</em></span>
		</footer>
	</div>

	<div class="dialog">
		<div class="dlgtitle">
			<div class="lights dl"><i></i><i></i><i class="green"></i></div>
			<span>Einstellungen für die Rasterelement-Auswahl</span>
		</div>
		<div class="dlgbody">
			<div class="topline">
				<span class="wbtn favbtn"><svg class="ic" width="36" height="36" viewBox="0 0 44 44">{@html icons.star}</svg>{@render chevron()}</span>
				<span class="selcount">Gewählt: 6 Bearbeitbar: 6</span>
			</div>

			{@render sectionHead('Grundriss', 'secgrid', false, 'first')}
			<div class="form grund">
				<div class="fleft">
					<div class="lbl">Rasterlinie:</div>
					<div class="linerow">
						{@render lineTypes()}
						<div class="segcol">
							<div class="lbl r">Segmentlänge:</div>
							<div class="field off">0,000</div>
						</div>
					</div>
					<div class="stylerow">
						<svg class="ic thin" width="76" height="40" viewBox="0 0 76 40">
							<path d="M2 13h50M2 27h50M14 5v30M26 5v30M38 5v30" stroke-dasharray="3 2" stroke="#6b7278" />
							<g stroke="#6b7278"><rect x="12" y="1" width="4" height="4" /><rect x="24" y="1" width="4" height="4" /><rect x="36" y="1" width="4" height="4" /><rect x="12" y="35" width="4" height="4" /><rect x="24" y="35" width="4" height="4" /><rect x="36" y="35" width="4" height="4" /></g>
							<path d="M56 36L74 8" />
						</svg>
						{@render lineBox()}
					</div>
				</div>
				<div class="fright">
					<div class="lbl showl">Auf Geschoss zeigen:</div>
					<div class="select wbtn geschoss"><span>In allen Geschossen</span><span class="bluestep">{@render updown(true)}</span></div>
					{@render penRow(true)}
				</div>
			</div>
			<div class="divider"></div>
			<div class="form2 m1">
				<div class="m-left">
					<div class="lbl">Marker:</div>
					{@render markerBlock()}
				</div>
				<div class="m-right">
					<div class="lbl">Verzug:</div>
					<div class="vzrow v1">
						<div class="field num vzinp">1,000</div>
						{@render offsetIcon(true)}
					</div>
				</div>
			</div>

			{@render sectionHead('Schnitt/Ansicht', 'secgrid')}
			<div class="selrow">
				<div class="select wbtn"><span>Allgemein</span><span class="bluestep">{@render updown(true)}</span></div>
				<div class="select offsel"><span>Kopieren von...</span>{@render updown()}</div>
			</div>
			<div class="divider d-sec"></div>
			<div class="form sec">
				<div class="fleft">
					<div class="lbl">Rasterlinie:</div>
					<div class="linerow">
						{@render lineTypes()}
						<div class="segcol">
							<div class="lbl r">Segmentlänge:</div>
							<div class="field off">1,000</div>
						</div>
					</div>
					<div class="stylerow s2">
						<svg class="ic thin" width="76" height="40" viewBox="0 0 76 40">
							<path d="M14 5v30M26 5v30M38 5v30" stroke="#4b5258" />
							<g stroke="#6b7278"><rect x="12" y="1" width="4" height="4" /><rect x="24" y="1" width="4" height="4" /><rect x="36" y="1" width="4" height="4" /><rect x="12" y="35" width="4" height="4" /><rect x="24" y="35" width="4" height="4" /><rect x="36" y="35" width="4" height="4" /></g>
							<path d="M56 36L74 8" />
						</svg>
						{@render lineBox()}
					</div>
				</div>
				<div class="fright pr2">
					{@render penRow(false)}
				</div>
			</div>
			<div class="divider"></div>
			<div class="form2 m2">
				<div class="m-left m-left2">
					<div class="mcol">
						<div class="lbl">Marker:</div>
						<div class="mbwrap">{@render markerBlock()}</div>
					</div>
					<div class="fieldcol">
						<div class="projrow"><span>zu Projektursprung</span><span class="wbtn mini">{@render chevron()}</span></div>
						<div class="field num big">25,000</div>
						<div class="projrow p2"><span>zu Projektursprung</span><span class="wbtn mini">{@render chevron()}</span></div>
						<div class="field num big b2">-7,000</div>
					</div>
				</div>
				<div class="m-right tall">
					<div class="lbl">Verzug:</div>
					<div class="vzrow v2">
						<div class="field num vzinp">1,000</div>
						{@render offsetIcon(false)}
					</div>
				</div>
			</div>

			{@render sectionHead('Bezeichnungsregeln', '', false, 'wide')}
			<div class="radrow">
				<span class="radio on"></span>
				<span class="radlabel">Individuell</span>
				<div class="field num a6">A6</div>
			</div>
			<div class="autorow">
				<span class="radio"></span>
				<span class="radlabel off">Bezeichnung automatisch erstellen</span>
			</div>
			<div class="autogrid">
				<span></span><span class="al">Beginnen mit:</span><span></span><span class="al">Präfix:</span><span></span><span class="al">Stil:</span><span></span><span class="al">Suffix:</span>
				<span></span><div class="field off">7</div><span></span><div class="field off"></div><span></span>
				<div class="select offsel stil"><span>1,2,3,...</span>{@render updown()}</div>
				<span></span><div class="field off"></div>
			</div>

			{@render sectionHead('Marker', 'marker', true, 'wide s-m')}
			{@render sectionHead('Textstil', 'textst', true, 's10')}
			{@render sectionHead('3D-Ansicht', 'pin', true, 's10')}
			{@render sectionHead('Klassifizierung und Eigenschaften', 'doc', true, 's10')}

			<div class="divider d-end"></div>
			<div class="dlgfoot">
				<svg class="ic" width="50" height="30" viewBox="0 0 46 42" preserveAspectRatio="none">{@html icons.stack}</svg>
				<div class="wbtn footebene">
					<svg class="ic" width="32" height="32" viewBox="0 0 32 32">{@html icons.eye}</svg>
					<span>90 Achsraster</span>
					{@render chevron()}
				</div>
				<div class="wbtn abbr">Abbrechen</div>
				<div class="okbtn">OK</div>
			</div>
		</div>
	</div>
</div>

<style>
	:global(body) {
		margin: 0;
		background: #fff;
	}

	.page {
		position: relative;
		width: 3446px;
		height: 2200px;
		padding: 52px 0 0 66px;
		box-sizing: border-box;
		overflow: hidden;
		font-family: Inter, 'Noto Sans', sans-serif;
		font-size: 22px;
		color: #262626;
	}

	.ic {
		display: block;
		flex: none;
		fill: none;
		stroke: #2b3640;
		color: #2b3640;
		stroke-width: 2;
		font-family: Inter, sans-serif;
		overflow: visible;
	}

	.ic.thin {
		stroke-width: 1.8;
	}

	.ic.dim {
		stroke: #8a8f94;
		color: #8a8f94;
	}

	.chev {
		display: block;
		flex: none;
		fill: none;
		stroke: #20262b;
		stroke-width: 2.4;
	}

	:global(.chev.cg) {
		stroke: #9a9a9a;
	}

	.updown {
		display: block;
		flex: none;
		fill: none;
		stroke: #2b3640;
		stroke-width: 2.2;
	}

	.updown.white {
		stroke: #fff;
	}

	.window {
		width: 3312px;
		height: 2064px;
		box-sizing: border-box;
		display: flex;
		flex-direction: column;
		background: #ebebeb;
		border: 2px solid #cdcdcd;
		border-radius: 24px;
		overflow: hidden;
		box-shadow: 0 18px 50px rgba(0, 0, 0, 0.2);
	}

	.titlebar {
		flex: none;
		height: 53px;
		background: #e9e8e9;
		border-bottom: 2px solid #c9c9c9;
		display: flex;
		align-items: center;
		position: relative;
	}

	.lights {
		display: flex;
		gap: 16px;
		padding-left: 17px;
	}

	.lights i {
		width: 24px;
		height: 24px;
		border-radius: 50%;
		background: #d2d1d0;
		border: 1px solid #c1c0bf;
		box-sizing: border-box;
	}

	.lights i.green {
		background: #5ac14b;
		border-color: #50ad44;
	}

	.wintitle {
		position: absolute;
		left: 1570px;
		top: -2px;
		height: 100%;
		display: flex;
		align-items: center;
		gap: 12px;
		font-size: 26.5px;
		font-weight: 600;
		color: #a9a9a9;
	}

	.toolrow {
		flex: none;
		height: 71px;
		background: #e4e4e4;
		border-bottom: 2px solid #e2e2e2;
		display: flex;
	}

	.toolbar {
		width: 2790px;
		background: #ebebeb;
		display: flex;
		align-items: center;
		padding: 0 0 3px 8px;
		box-sizing: border-box;
	}

	.tsep {
		flex: none;
		width: 2px;
		height: 44px;
		background: #d0d0d0;
		margin: 0 11px;
	}

	.tsep.first {
		margin: 0 8px 0 0;
		background: #b8b8b8;
	}

	.tool {
		flex: none;
		height: 58px;
		display: flex;
		align-items: center;
		justify-content: center;
		border-radius: 10px;
		box-sizing: border-box;
	}

	.tool.on,
	.tdrop.on {
		background: #bcbbc0;
		box-shadow: 0 1px 2px rgba(0, 0, 0, 0.15);
	}

	.tdrop {
		flex: none;
		height: 58px;
		display: flex;
		align-items: center;
		justify-content: center;
		border-radius: 10px;
	}

	.infobox {
		flex: none;
		height: 120px;
		display: flex;
		padding-left: 9px;
		background: #ebebeb;
	}

	.infocell {
		flex: none;
		width: 370px;
		box-sizing: border-box;
		border-right: 2px solid #d6d6d6;
		padding-left: 9px;
		position: relative;
		display: flex;
		flex-wrap: wrap;
		align-content: flex-start;
		overflow: hidden;
	}

	.infocell:last-child {
		border-right: none;
	}

	.infolabel {
		flex: 0 0 100%;
		margin-top: 6px;
		line-height: 24px;
		font-size: 18.6px;
		color: #2a2a2a;
		white-space: nowrap;
	}

	.wbtn {
		background: #fff;
		border-radius: 10px;
		box-shadow: 0 1px 2px rgba(0, 0, 0, 0.35);
		box-sizing: border-box;
	}

	.haupt {
		width: 248px;
		height: 58px;
		margin: -1px 0 0 0;
		position: relative;
	}

	.infocell:first-child .infolabel {
		margin-bottom: 17px;
	}

	.alle {
		font-size: 18.6px;
		line-height: 22px;
		margin-top: -7px;
	}

	.hauptbtns {
		display: flex;
		gap: 4px;
		margin: 0 0 0 2px;
	}

	.hb {
		width: 80px;
		height: 37px;
		display: flex;
		align-items: center;
		gap: 4px;
		padding-left: 6px;
		flex: none;
		overflow: hidden;
	}

	.hb.grey {
		background: #bcbbc0;
		border-radius: 10px;
		box-shadow: 0 1px 2px rgba(0, 0, 0, 0.2);
		justify-content: center;
		padding: 0;
	}

	.pinbtn {
		width: 77px;
		height: 58px;
		flex: none;
		margin: -1px 0 0 5px;
		display: flex;
		align-items: center;
		justify-content: center;
	}

	.pinmore {
		width: 15px;
		height: 58px;
		margin: -1px 0 0 4px;
		display: flex;
		align-items: center;
		justify-content: center;
		flex: none;
	}

	.ebene {
		width: 348px;
		height: 57px;
		margin-top: 17px;
		margin-left: 1px;
		display: flex;
		align-items: center;
		padding: 0 8px 0 18px;
		gap: 8px;
	}

	.ebene span {
		flex: 1;
	}

	.geom {
		width: 120px;
		height: 56px;
		margin: 17px 0 0 3px;
		background: #c9c9c9;
		border-radius: 8px;
	}

	.autofld {
		width: 360px;
		height: 41px;
		margin: 24px 0 0 -9px;
		background: #f4f4f4;
		box-shadow: 0 1px 1px rgba(0, 0, 0, 0.15);
	}

	.markerline {
		display: flex;
		align-items: center;
		margin: 34px 0 0 34px;
	}

	.markerline .ic {
		margin: 0 17px 0 18px;
	}

	.check {
		display: block;
		width: 24px;
		height: 26px;
		border-radius: 5px;
		background: #fff;
		box-shadow: 0 0 1px 1px rgba(0, 0, 0, 0.12);
		flex: none;
	}

	.select {
		display: flex;
		align-items: center;
		justify-content: space-between;
		height: 40px;
		padding: 0 6px 0 17px;
		box-sizing: border-box;
		flex: none;
	}

	.select.attr {
		width: 347px;
		margin: 25px 0 0 3px;
		padding-right: 12px;
	}

	.select.font {
		width: 340px;
		margin: 25px 0 0 2px;
		padding: 0 8px 0 49px;
		overflow: hidden;
	}

	.select.font span {
		flex: 1;
	}

	.sizerow {
		display: flex;
		align-items: flex-start;
		margin: 26px 0 0 102px;
		gap: 13px;
	}

	.field {
		background: #fff;
		box-shadow: 0 1px 1.5px rgba(0, 0, 0, 0.35);
		box-sizing: border-box;
		display: flex;
		align-items: center;
		height: 40px;
		padding-left: 8px;
	}

	.sizeinp {
		width: 172px;
		height: 34px;
		margin-top: 3px;
		padding-left: 6px;
	}

	.main {
		flex: 1;
		min-height: 0;
		display: flex;
	}

	.leftpanel {
		flex: none;
		width: 286px;
		display: flex;
		flex-direction: column;
		position: relative;
	}

	.grab {
		position: absolute;
		top: 10px;
		left: 89px;
		width: 108px;
		height: 2px;
		background: #b4b4b4;
	}

	.sidelist {
		background: #f0efee;
		padding-top: 17px;
		height: 1491px;
		box-sizing: border-box;
	}

	.sideitem {
		height: 56px;
		display: flex;
		align-items: center;
		gap: 18px;
		padding-left: 18px;
		white-space: nowrap;
	}

	.sideitem.on {
		height: 53px;
		margin: 0 2px 1px 2px;
		padding-left: 16px;
		background: #bcbbc0;
		border-radius: 8px;
	}

	.sidehead {
		height: 39px;
		margin: 2px 1px 3px 0;
		background: #d5d5d5;
		border-radius: 6px;
		display: flex;
		align-items: center;
		padding-left: 44px;
		position: relative;
		color: #3a3a3a;
	}

	.tri {
		width: 0;
		height: 0;
		flex: none;
		border-style: solid;
		border-width: 13px 9px 0 9px;
		border-color: #8e8e8e transparent transparent transparent;
	}

	.tri.closed {
		border-width: 9px 0 9px 13px;
		border-color: transparent transparent transparent #8e8e8e;
		margin-left: 3px;
		margin-right: 2px;
	}

	.tri.small {
		position: absolute;
		left: 11px;
		top: 13px;
		margin: 0;
		border-width: 11px 8px 0 8px;
	}

	.tri.small.closed {
		border-width: 8px 0 8px 12px;
		top: 11px;
		margin: 0;
		left: 13px;
	}

	.center {
		flex: none;
		width: 2651px;
		display: flex;
		flex-direction: column;
		margin: 0 2px;
	}

	.tabs {
		flex: none;
		height: 46px;
		display: flex;
		background: #e3e3e3;
	}

	.gridbtn {
		width: 65px;
		flex: none;
		display: flex;
		align-items: center;
		justify-content: center;
		background: #e6e6e6;
	}

	.tab {
		width: 680px;
		flex: none;
		background: #fff;
		display: flex;
		align-items: center;
		gap: 6px;
		padding-left: 211px;
		box-sizing: border-box;
	}

	.tabfill {
		flex: 1;
	}

	.tabr {
		flex: none;
		width: 99px;
		background: #fff;
		display: flex;
		align-items: center;
		gap: 6px;
		padding-left: 17px;
		box-sizing: border-box;
	}

	.canvas {
		flex: 1;
		min-height: 0;
		background: #fff;
		position: relative;
	}

	.drawing {
		position: absolute;
		inset: 0;
		width: 100%;
		height: 100%;
	}

	.orange {
		position: absolute;
		top: 810px;
		width: 30px;
		height: 58px;
		background: #f2f2f2;
		z-index: 1;
	}

	.orange::after {
		content: '';
		position: absolute;
		left: 15px;
		top: 3px;
		bottom: 3px;
		border-left: 2px dashed #f2a65a;
	}

	.orange.left {
		left: 2px;
	}

	.orange.right {
		right: 2px;
		width: 24px;
	}

	.orange.right::after {
		left: 11px;
	}

	.statusbar {
		flex: none;
		height: 36px;
		display: flex;
		align-items: center;
		background: #ebebeb;
		overflow: hidden;
	}

	.zooms {
		width: 144px;
		flex: none;
		display: flex;
		padding-left: 2px;
		box-sizing: border-box;
	}

	.zooms :global(.ic) {
		width: 46px;
		height: 34px;
	}

	.scell {
		flex: none;
		width: 228.7px;
		height: 34px;
		box-sizing: border-box;
		border-left: 2px solid #d0d0d0;
		display: flex;
		align-items: center;
		padding: 0 14px 0 4px;
		font-size: 21px;
		white-space: nowrap;
	}

	.scell :global(.ic) {
		width: 38px;
		height: 34px;
	}

	.stxt {
		flex: 1;
		overflow: hidden;
		text-align: center;
		padding-left: 8px;
	}

	.rightpanel {
		flex: 1;
		min-width: 0;
		position: relative;
		padding-left: 7px;
		padding-right: 4px;
		background: #ebebeb;
		box-sizing: border-box;
		display: flex;
		flex-direction: column;
	}

	.rightpanel .grab {
		left: 115px;
		width: 140px;
		top: 11px;
	}

	.rightpanel .grab.g2 {
		position: static;
		margin: 8px 0 0 108px;
		flex: none;
	}

	.rtabs {
		margin-top: 21px;
		height: 56px;
		display: flex;
		align-items: center;
		flex: none;
	}

	.rtab {
		width: 56px;
		height: 56px;
		display: flex;
		align-items: center;
		justify-content: center;
		flex: none;
		margin-right: 4px;
		border-radius: 8px;
	}

	.rtab.on {
		background: #bcbbc0;
		margin-right: 14px;
	}

	.rsep {
		width: 2px;
		height: 38px;
		background: #d0d0d0;
		margin-right: 12px;
	}

	.menubtn {
		width: 66px;
		height: 43px;
		margin-left: 24px;
		display: flex;
		align-items: center;
		justify-content: center;
		gap: 12px;
		flex: none;
	}

	.search {
		margin-top: 14px;
		height: 40px;
		background: #fff;
		box-shadow: 0 1px 1.5px rgba(0, 0, 0, 0.3);
		display: flex;
		align-items: center;
		padding-left: 10px;
		gap: 15px;
		color: #b9b9b9;
		flex: none;
		white-space: nowrap;
		overflow: hidden;
		box-sizing: border-box;
	}

	.search span {
		width: 255px;
		overflow: hidden;
		font-size: 21.5px;
	}

	.treewrap {
		margin: 9px -4px 0 -7px;
		display: flex;
		height: 925px;
		flex: none;
		overflow: hidden;
	}

	.tree {
		width: 338px;
		flex: none;
		background: #fff;
		overflow: hidden;
	}

	.trow {
		height: 48px;
		box-sizing: border-box;
		display: flex;
		align-items: center;
		white-space: nowrap;
	}

	.trow.sel {
		background: #dcdcdc;
		font-weight: 700;
	}

	.tchev {
		width: 38px;
		flex: none;
		display: flex;
		justify-content: center;
		align-items: center;
	}

	.tchev svg {
		fill: none;
		stroke: #8a8a8a;
		stroke-width: 2;
		display: block;
	}

	.ticon {
		width: 38px;
		flex: none;
		display: flex;
		justify-content: center;
	}

	.tlabel {
		margin-left: 7px;
	}

	.vscroll {
		flex: 1;
		background: #f6f6f6;
		padding: 7px 0 0 8px;
	}

	.vscroll i {
		display: block;
		width: 16px;
		height: 245px;
		border-radius: 8px;
		background: #c4c4c4;
	}

	.hscroll {
		height: 27px;
		background: #f6f6f6;
		margin: 0 -4px 0 -7px;
		flex: none;
		padding: 7px 0 0 6px;
		box-sizing: border-box;
	}

	.hscroll i {
		display: block;
		width: 147px;
		height: 16px;
		border-radius: 8px;
		background: #c4c4c4;
	}

	.actions {
		height: 70px;
		flex: none;
		display: flex;
		align-items: center;
		gap: 26px;
		padding-left: 15px;
		box-sizing: border-box;
	}

	.beschr {
		height: 43px;
		margin: 0 -2px;
		background: #d5d5d5;
		border-radius: 6px;
		display: flex;
		align-items: center;
		padding-left: 45px;
		position: relative;
		flex: none;
	}

	.descrow {
		display: flex;
		align-items: center;
		height: 32px;
		margin-top: 13px;
		flex: none;
	}

	.desc0 {
		margin-left: 12px;
		width: 83px;
	}

	.descinp {
		width: 234px;
		height: 32px;
		padding-left: 7px;
	}

	.einst {
		height: 40px;
		margin-top: 8px;
		display: flex;
		align-items: center;
		justify-content: center;
		border-radius: 12px;
		flex: none;
	}

	.rdiv {
		height: 2px;
		background: #dcdcdc;
		margin: 8px -4px 0 -7px;
		flex: none;
	}

	.quick {
		display: flex;
		gap: 4px;
		margin-top: 12px;
		height: 55px;
		flex: none;
	}

	.qb {
		width: 56px;
		display: flex;
		align-items: center;
		justify-content: center;
		flex: none;
	}

	.qstory {
		flex: 1;
		background: #f4f4f4;
		border-radius: 10px;
		box-shadow: 0 1px 1px rgba(0, 0, 0, 0.15);
		display: flex;
		align-items: center;
		padding: 0 8px 0 6px;
		gap: 8px;
		color: #b5b5b5;
	}

	.qstory span {
		flex: 1;
	}

	.navicons {
		display: flex;
		align-items: center;
		flex: none;
		height: 38px;
		margin-top: 16px;
	}

	.navicons.five {
		gap: 22px;
		padding-left: 9px;
		margin-bottom: 17px;
	}

	.navgap {
		width: 40px;
	}

	.ghostlabel {
		color: #8c8c8c;
		font-size: 21px;
		line-height: 24px;
		flex: none;
	}

	.ghostlabel.tp {
		margin-top: 13px;
		margin-bottom: 14px;
	}

	.ghostlabel.ak {
		margin-top: 13px;
		margin-bottom: 13px;
	}

	.sliderrow {
		display: flex;
		height: 55px;
		flex: none;
	}

	.qbd {
		width: 56px;
		flex: none;
		height: 55px;
		background: #f4f4f4;
		border-radius: 10px;
		box-shadow: 0 1px 1px rgba(0, 0, 0, 0.15);
		display: flex;
		align-items: center;
		gap: 10px;
		padding-left: 6px;
		box-sizing: border-box;
	}

	.qbd.narrow {
		width: 26px;
		padding-left: 8px;
		margin-left: 6px;
	}

	.swatch {
		width: 24px;
		height: 24px;
		background: #ea908c;
		display: block;
		flex: none;
	}

	.slider {
		width: 260px;
		margin-left: 8px;
		position: relative;
		flex: none;
	}

	.trk {
		position: absolute;
		left: 0;
		right: 10px;
		top: 14px;
		height: 16px;
		display: flex;
		justify-content: space-between;
		background: linear-gradient(#e4e4e4, #e4e4e4) center / 100% 6px no-repeat;
	}

	.trk i {
		width: 4px;
		background: #e2e2e2;
		display: block;
	}

	.slider b {
		position: absolute;
		right: 0;
		top: 6px;
		width: 16px;
		height: 32px;
		background: #f6f6f6;
		border-radius: 6px;
		box-shadow: 0 1px 1px rgba(0, 0, 0, 0.15);
	}

	.rdiv.d3 {
		margin-top: 15px;
	}

	.navicons.four {
		gap: 23px;
		padding-left: 78px;
		margin-top: 20px;
	}

	.bottombar {
		flex: none;
		height: 46px;
		background: #ebebeb;
		border-top: 2px solid #e2e2e2;
		display: flex;
		align-items: center;
		justify-content: flex-end;
		padding-right: 22px;
	}

	.bsep {
		width: 2px;
		height: 30px;
		background: #c0c0c0;
		margin: 0 22px 0 20px;
	}

	.gs {
		font-size: 29px;
		letter-spacing: -1.6px;
		font-weight: 500;
		color: #2d3740;
		white-space: nowrap;
	}

	.gs em {
		font-style: normal;
		font-weight: 300;
		color: #5b6369;
	}

	/* settings dialog */
	.dialog {
		position: absolute;
		left: 863px;
		top: 211px;
		width: 1019px;
		height: 1834px;
		background: #ebebeb;
		border-radius: 22px;
		box-shadow: 0 0 3px rgba(0, 0, 0, 0.35), 0 24px 70px rgba(0, 0, 0, 0.42);
		overflow: hidden;
		z-index: 2;
	}

	.dlgtitle {
		height: 55px;
		background: #f6f5f3;
		border-bottom: 2px solid #d2d2d2;
		display: flex;
		align-items: center;
		position: relative;
		font-size: 26.5px;
		font-weight: 600;
		color: #444;
	}

	.dlgtitle span {
		position: absolute;
		left: 218px;
		white-space: nowrap;
	}

	.lights.dl {
		padding-left: 16px;
		gap: 16px;
	}

	.dlgbody {
		padding: 21px 30px 0;
	}

	.topline {
		height: 47px;
		display: flex;
		align-items: center;
		justify-content: space-between;
	}

	.selcount {
		margin-bottom: 2px;
	}

	.favbtn {
		width: 77px;
		height: 47px;
		margin-left: 1px;
		display: flex;
		align-items: center;
		gap: 3px;
		padding-left: 10px;
	}

	.sechead {
		height: 44px;
		background: #d5d5d5;
		border-radius: 7px;
		display: flex;
		align-items: center;
		padding-left: 11px;
		font-weight: 600;
		font-size: 23px;
		color: #2d2d2d;
		flex: none;
	}

	.sechead.first {
		margin-top: 22px;
	}

	.sechead.s10 {
		margin-top: 10px;
	}

	.sechead.s-m {
		margin-top: 18px;
	}

	.secicon {
		width: 48px;
		flex: none;
		margin-left: 15px;
		display: flex;
		align-items: center;
		height: 42px;
		overflow: visible;
	}

	.sechead.wide .secicon {
		width: 61px;
		margin-left: 13px;
	}

	.x1 {
		font-weight: 400;
		color: #555;
		font-size: 21px;
	}

	.lbl {
		line-height: 24px;
		white-space: nowrap;
	}

	.lbl.r {
		text-align: right;
	}

	.form {
		display: grid;
		grid-template-columns: 568px 327px;
		column-gap: 64px;
	}

	.form.grund {
		height: 273px;
	}

	.form.sec {
		height: 278px;
	}

	.fleft > .lbl {
		margin-top: 20px;
	}

	.form.sec .fleft > .lbl {
		margin-top: 26px;
	}

	.linerow {
		display: flex;
		margin-top: 16px;
		height: 94px;
		padding-left: 101px;
		gap: 22px;
	}

	.linetypes {
		display: flex;
		gap: 14px;
		flex: none;
	}

	.lt {
		width: 40px;
		height: 94px;
		border-radius: 8px;
		display: flex;
		align-items: center;
		justify-content: center;
	}

	.lt.on {
		background: #bcbbc0;
	}

	.segcol {
		width: 296px;
		padding-top: 17px;
		flex: none;
	}

	.field.off {
		background: #f4f4f4;
		box-shadow: 0 1px 1px rgba(0, 0, 0, 0.12);
		color: #b5b5b5;
	}

	.segcol .field {
		margin-top: 12px;
	}

	.stylerow {
		display: flex;
		align-items: center;
		gap: 16px;
		padding-left: 9px;
		margin-top: 17px;
		height: 73px;
	}

	.stylerow.s2 {
		margin-top: 16px;
	}

	.linebox {
		width: 465px;
		height: 73px;
		background: #fff;
		border-radius: 8px;
		box-shadow: 0 1px 2px rgba(0, 0, 0, 0.35);
		padding: 6px 6px 0 15px;
		box-sizing: border-box;
		flex: none;
		font-size: 21px;
		margin-left: 2px;
	}

	.lbtxt {
		display: block;
		line-height: 24px;
	}

	.lbline {
		display: flex;
		align-items: center;
		gap: 5px;
	}

	.lbline span {
		flex: 1;
		height: 2.5px;
		background: #111;
		margin-top: 14px;
	}

	.lbline :global(.chev) {
		margin-top: -6px;
	}

	.showl {
		margin-top: 10px;
	}

	.geschoss {
		margin-top: 27px;
		width: 326px;
		padding-right: 4px;
	}

	.bluestep {
		width: 32px;
		height: 32px;
		flex: none;
		border-radius: 7px;
		background: #3f7cf5;
		display: flex;
		align-items: center;
		justify-content: center;
	}

	.penrow {
		display: flex;
		align-items: center;
		justify-content: flex-end;
		margin-top: 84px;
		height: 40px;
		gap: 12px;
	}

	.pr2 .penrow {
		margin-top: 190px;
	}

	.pennum {
		width: 57px;
		height: 32px;
		margin-right: 2px;
		padding-left: 6px;
	}

	.colbtn {
		width: 66px;
		height: 39px;
		background: #fff;
		border-radius: 10px;
		box-shadow: 0 1px 2px rgba(0, 0, 0, 0.35);
		display: flex;
		align-items: center;
		justify-content: center;
		gap: 12px;
		flex: none;
	}

	.colbtn i {
		width: 2px;
		height: 22px;
		background: #111;
	}

	.colbtn b {
		width: 25px;
		height: 22px;
		background: #000;
	}

	.divider {
		height: 2px;
		background: #d8d8d8;
	}

	.d-sec {
		margin-top: 22px;
	}

	.d-end {
		margin-top: 25px;
	}

	.form2 {
		display: flex;
	}

	.form2.m1 {
		height: 177px;
	}

	.form2.m2 {
		height: 209px;
	}

	.m-left {
		width: 603px;
		flex: none;
		padding-top: 21px;
		box-sizing: border-box;
	}

	.m-left2 {
		display: flex;
		padding-top: 0;
	}

	.mcol {
		width: 262px;
		flex: none;
		padding-top: 21px;
	}

	.mbwrap :global(.markerblock) {
		margin-top: 30px;
	}

	.markerblock {
		display: flex;
		margin: 13px 0 0 113px;
		gap: 11px;
	}

	.checks {
		display: flex;
		flex-direction: column;
		justify-content: space-between;
	}

	.checks .check {
		width: 27px;
	}

	.m-right {
		flex: 1;
		margin-top: 23px;
		height: 139px;
		border-left: 2px solid #d8d8d8;
		padding-left: 26px;
		position: relative;
	}

	.m-right.tall {
		margin-top: 20px;
		height: 178px;
	}

	.m-right .lbl {
		margin-top: -2px;
	}

	.m-right.tall .lbl {
		margin-top: 1px;
	}

	.vzrow {
		display: flex;
		align-items: flex-end;
	}

	.vzrow.v1 {
		margin-top: 38px;
	}

	.vzrow.v2 {
		margin-top: 28px;
	}

	.vzinp {
		width: 197px;
		height: 41px;
		margin: 0 17px 4px -2px;
		flex: none;
	}

	.fieldcol {
		width: 306px;
		flex: none;
		padding-top: 20px;
	}

	.projrow {
		display: flex;
		justify-content: flex-end;
		align-items: center;
		height: 27px;
		gap: 14px;
	}

	.projrow.p2 {
		margin-top: 19px;
	}

	.mini {
		width: 25px;
		height: 27px;
		display: flex;
		align-items: center;
		justify-content: center;
		border-radius: 8px;
	}

	.big {
		height: 41px;
		margin-top: 9px;
	}

	.big.b2 {
		margin-top: 10px;
	}

	.radrow {
		display: flex;
		align-items: center;
		margin-top: 11px;
		height: 42px;
		width: 568px;
	}

	.radio {
		width: 28px;
		height: 28px;
		border-radius: 50%;
		background: #f4f4f4;
		box-shadow: 0 0 1px 1px rgba(0, 0, 0, 0.08);
		flex: none;
		box-sizing: border-box;
	}

	.radio.on {
		background: #fff;
		border: 8px solid #3f7cf5;
		box-shadow: 0 1px 2px rgba(0, 0, 0, 0.3);
	}

	.radlabel {
		margin-left: 12px;
	}

	.radlabel.off {
		color: #a2a2a2;
	}

	.a6 {
		width: 307px;
		height: 42px;
		margin-left: auto;
	}

	.autorow {
		display: flex;
		align-items: center;
		margin-top: 25px;
		height: 28px;
	}

	.autogrid {
		display: grid;
		grid-template-columns: 262px 126px 54px 126px 64px 166px 54px 107px;
		grid-template-rows: 24px 40px;
		row-gap: 11px;
		margin-top: 21px;
	}

	.al {
		justify-self: end;
		color: #a2a2a2;
		line-height: 24px;
		white-space: nowrap;
	}

	.offsel {
		background: #f4f4f4;
		border-radius: 10px;
		box-shadow: 0 1px 1px rgba(0, 0, 0, 0.12);
		color: #b5b5b5;
		padding-right: 12px;
	}

	.offsel :global(.updown) {
		stroke: #9a9a9a;
	}

	.stil {
		padding-left: 16px;
		padding-right: 10px;
	}

	.selrow {
		display: grid;
		grid-template-columns: 565px 326px;
		column-gap: 65px;
		margin: 11px 1px 0 2px;
	}

	.selrow .wbtn {
		padding-right: 4px;
	}

	.dlgfoot {
		display: flex;
		align-items: center;
		margin-top: 22px;
		height: 43px;
	}

	.dlgfoot > :global(.ic) {
		margin-left: 5px;
	}

	.footebene {
		width: 475px;
		height: 43px;
		margin-left: 17px;
		display: flex;
		align-items: center;
		gap: 6px;
		padding: 0 10px 0 16px;
	}

	.footebene span {
		flex: 1;
	}

	.abbr {
		width: 175px;
		height: 40px;
		margin-left: 35px;
		display: flex;
		align-items: center;
		justify-content: center;
	}

	.okbtn {
		width: 176px;
		height: 40px;
		margin-left: 25px;
		border-radius: 10px;
		background: linear-gradient(#4a88f8, #2f72f0);
		color: #fff;
		display: flex;
		align-items: center;
		justify-content: center;
		font-weight: 500;
	}
</style>
